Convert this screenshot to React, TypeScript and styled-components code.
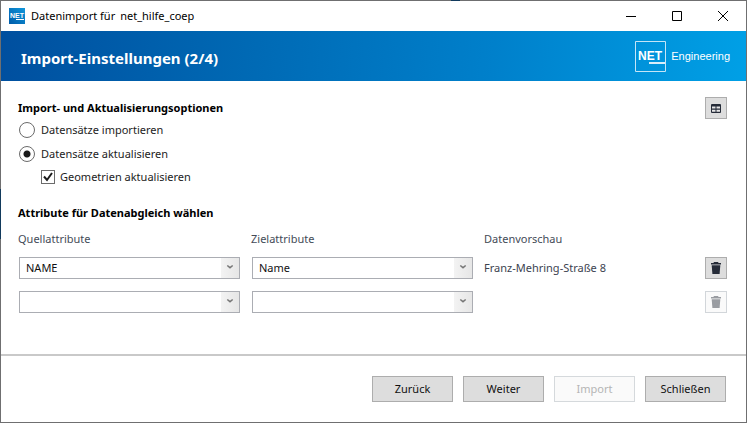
import React, { useState } from "react";
import styled, { createGlobalStyle } from "styled-components";

const GlobalStyle = createGlobalStyle`
  *, *::before, *::after { box-sizing: border-box; }
  html, body, #root { height: 100%; }
  body {
    margin: 0;
    font-family: "Noto Sans", "Open Sans", sans-serif;
    font-size: 11px;
    line-height: 16px;
    color: #1c1c1c;
    background: #6f6f70;
  }
  button, input, select { font: inherit; color: inherit; margin: 0; }
`;

const Frame = styled.div`
  min-height: 100vh;
  padding: 1px;
  display: flex;
  background:
    linear-gradient(#123a5c, #123a5c) 0 189px / 1px 50px no-repeat,
    linear-gradient(#123a5c, #123a5c) 451px 0 / 9px 1px no-repeat,
    #6f6f70;
`;

const Dialog = styled.div`
  flex: 1;
  min-width: 0;
  display: flex;
  flex-direction: column;
  background: #fff;
`;

const TitleBar = styled.header`
  height: 30px;
  display: flex;
  align-items: center;
  padding-left: 8px;
  color: #000;
`;

const AppIcon = styled.svg`
  width: 16px;
  height: 16px;
  flex: none;
`;

const WindowTitle = styled.div`
  flex: 1;
  display: flex;
  gap: 5px;
  margin-left: 6px;
  white-space: nowrap;
`;

const WindowButton = styled.button`
  width: 46px;
  height: 30px;
  padding: 0;
  border: 0;
  background: transparent;
  display: grid;
  place-items: center;
  svg { width: 10px; height: 10px; }
`;

const Banner = styled.div`
  height: 50px;
  display: flex;
  align-items: center;
  justify-content: space-between;
  padding: 0 16px 0 20px;
  color: #fff;
  background: linear-gradient(95deg, #004f9f 0%, #0069b4 33%, #0080cb 66%, #00a0e6 100%);
`;

const BannerTitle = styled.h1`
  margin: 0;
  padding-top: 4px;
  font-size: 15px;
  line-height: 24px;
  font-weight: 700;
`;

const Brand = styled.div`
  display: flex;
  align-items: center;
  gap: 5px;
  font-family: "Liberation Sans", Arial, sans-serif;
`;

const BrandMark = styled.svg`
  width: 31px;
  height: 31px;
`;

const Content = styled.main`
  flex: 1;
  padding: 16px 19px 0 17px;
`;

const TopRow = styled.div`
  display: flex;
  justify-content: space-between;
  align-items: flex-start;
`;

const Options = styled.fieldset`
  margin: 0;
  padding: 2px 0 0;
  border: 0;
  min-width: 0;
`;

const Heading = styled.h2`
  margin: 0;
  font-size: 11px;
  line-height: 16px;
  font-weight: 700;
  color: #000;
`;

const Legend = styled.legend`
  padding: 3px 0 0;
  font-weight: 700;
  color: #000;
`;

const Choice = styled.label<{ $nested?: boolean }>`
  display: flex;
  align-items: center;
  gap: ${(p) => (p.$nested ? 5 : 6)}px;
  height: ${(p) => (p.$nested ? 22 : 24)}px;
  margin-left: ${(p) => (p.$nested ? 23 : 1)}px;
`;

const Radio = styled.input.attrs({ type: "radio" })`
  appearance: none;
  width: 16px;
  height: 16px;
  border: 1px solid #6b6b6b;
  border-radius: 50%;
  background: #fff;
  &:checked { background: radial-gradient(circle, #1b1b1b 3px, #fff 4px); }
`;

const CheckBox = styled.span`
  display: grid;
  width: 14px;
  height: 14px;
  input, svg { grid-area: 1 / 1; width: 14px; height: 14px; }
  input { appearance: none; border: 1px solid #6b6b6b; background: #fff; }
  svg { pointer-events: none; visibility: hidden; }
  input:checked + svg { visibility: visible; }
`;

const IconButton = styled.button`
  width: 22px;
  height: 22px;
  padding: 0;
  display: grid;
  place-items: center;
  border: 1px solid #adadad;
  background: #dddddd;
  color: #252b38;
  &:disabled { border-color: #d2d6da; background: #fafafa; color: #9a9da2; }
`;

const Mapping = styled.section`
  margin-top: 17px;
`;

const MappingGrid = styled.div`
  display: grid;
  grid-template-columns: 17fr 17fr 16fr 22px;
  column-gap: 12px;
  row-gap: 12px;
  align-items: center;
  padding-left: 1px;
  margin-top: 10px;
`;

const ColumnLabel = styled.div`
  color: #444b57;
  margin-bottom: -2px;
  margin-left: -1px;
`;

const Preview = styled.output`
  color: #3c4350;
  margin-left: -1px;
`;

const SelectBox = styled.div`
  display: grid;
  grid-template-columns: 1fr 18px;
  height: 22px;
  border: 1px solid #abadb3;
  background: #fff;
  select {
    grid-area: 1 / 1 / 2 / 3;
    min-width: 0;
    appearance: none;
    border: 0;
    padding: 0 20px 0 6px;
    background: transparent;
    color: #111;
  }
`;

const Arrow = styled.span`
  grid-area: 1 / 2;
  display: grid;
  justify-items: center;
  padding-top: 6px;
  pointer-events: none;
  background: linear-gradient(90deg, #f3f3f3, #e6e6e6);
  svg { width: 8px; height: 6px; }
`;

const Footer = styled.footer`
  display: flex;
  justify-content: flex-end;
  gap: 10px;
  padding: 20px;
  border-top: 2px solid #c9c9c9;
`;

const ActionButton = styled.button`
  width: 81px;
  height: 26px;
  padding: 0;
  border: 1px solid #adadad;
  background: #dddddd;
  color: #111;
  &:disabled { border-color: #d5d9dc; background: #fafafa; color: #b5b5b5; }
`;

const TrashIcon = () => (
  <svg width="12" height="14" viewBox="0 0 12 14" fill="currentColor" aria-hidden="true">
    <path d="M4 1h4l.6 1H11v1.6H1V2h2.4z" />
    <path d="M1.7 4.2h8.6L9.6 13H2.4z" />
  </svg>
);

const TableIcon = () => (
  <svg width="10" height="9" viewBox="0 0 10 9" aria-hidden="true">
    <rect width="10" height="9" rx="1" fill="#252b38" />
    <path d="M1 2.500h3.500v2H1zM5.500 2.500H9v2H5.500zM1 5.700h3.500v2H1zM5.500 5.700H9v2H5.500z" fill="#e6e6e6" />
  </svg>
);

type SelectProps = { label: string; value: string; options: string[]; onChange: (v: string) => void };

const AttributeSelect = ({ label, value, options, onChange }: SelectProps) => (
  <SelectBox>
    <select aria-label={label} value={value} onChange={(e) => onChange(e.target.value)}>
      {options.map((o) => (
        <option key={o} value={o}>{o}</option>
      ))}
    </select>
    <Arrow>
      <svg viewBox="0 0 8 6" fill="none" stroke="#777" strokeWidth="1.500">
        <path d="M1.300 1.500 4 3.700l2.700-2.200" />
      </svg>
    </Arrow>
  </SelectBox>
);

export default function App() {
  const [mode, setMode] = useState("update");
  const [geometry, setGeometry] = useState(true);
  const [rows, setRows] = useState([
    { source: "NAME", target: "Name", preview: "Franz-Mehring-Straße 8" },
    { source: "", target: "", preview: "" },
  ]);
  const change = (i: number, key: "source" | "target", value: string) =>
    setRows(rows.map((r, n) => (n === i ? { ...r, [key]: value } : r)));

  return (
    <>
      <GlobalStyle />
      <Frame>
        <Dialog>
          <TitleBar>
            <AppIcon viewBox="0 0 16 16" aria-hidden="true">
              <defs>
                <linearGradient id="app-icon" x1="0" y1="1" x2="1" y2="0">
                  <stop offset="0" stopColor="#005ba8" />
                  <stop offset="1" stopColor="#1097dc" />
                </linearGradient>
              </defs>
              <rect width="16" height="16" fill="url(#app-icon)" />
              <text x="1" y="10" fill="#fff" fontFamily="Liberation Sans" fontWeight="700" fontSize="7">NET</text>
              <path d="M7 11.500h8" stroke="#fff" />
            </AppIcon>
            <WindowTitle>
              <span>Datenimport für</span>
              <span>net_hilfe_coep</span>
            </WindowTitle>
            <WindowButton aria-label="Minimieren">
              <svg viewBox="0 0 10 10" stroke="#000"><path d="M0 5.500h10" /></svg>
            </WindowButton>
            <WindowButton aria-label="Maximieren">
              <svg viewBox="0 0 10 10" stroke="#000" fill="none"><path d="M.5.5h9v9h-9z" /></svg>
            </WindowButton>
            <WindowButton aria-label="Fenster schließen">
              <svg viewBox="0 0 10 10" stroke="#000"><path d="m0 0 10 10M10 0 0 10" /></svg>
            </WindowButton>
          </TitleBar>

          <Banner>
            <BannerTitle>Import-Einstellungen (2/4)</BannerTitle>
            <Brand>
              <BrandMark viewBox="0 0 31 31" role="img" aria-label="NET">
                <path d="M.5.5h30v30H.5z" fill="none" stroke="#c5e5f7" />
                <text x="3" y="19" fill="#fff" fontFamily="Liberation Sans" fontWeight="700" fontSize="12">NET</text>
                <path d="M14 22h16" stroke="#d9eefa" strokeWidth="2" />
              </BrandMark>
              <span>Engineering</span>
            </Brand>
          </Banner>

          <Content>
            <TopRow>
              <Options>
                <Legend>Import- und Aktualisierungsoptionen</Legend>
                <Choice>
                  <Radio name="mode" checked={mode === "import"} onChange={() => setMode("import")} />
                  Datensätze importieren
                </Choice>
                <Choice>
                  <Radio name="mode" checked={mode === "update"} onChange={() => setMode("update")} />
                  Datensätze aktualisieren
                </Choice>
                <Choice $nested>
                  <CheckBox>
                    <input type="checkbox" checked={geometry} onChange={(e) => setGeometry(e.target.checked)} />
                    <svg viewBox="0 0 14 14" fill="none" stroke="#1b1b1b" strokeWidth="2">
                      <path d="M3 6.500 6 10l5-7" />
                    </svg>
                  </CheckBox>
                  Geometrien aktualisieren
                </Choice>
              </Options>
              <IconButton aria-label="Tabelle anzeigen"><TableIcon /></IconButton>
            </TopRow>

            <Mapping>
              <Heading>Attribute für Datenabgleich wählen</Heading>
              <MappingGrid>
                <ColumnLabel>Quellattribute</ColumnLabel>
                <ColumnLabel>Zielattribute</ColumnLabel>
                <ColumnLabel>Datenvorschau</ColumnLabel>
                <span />
                {rows.map((r, i) => (
                  <React.Fragment key={i}>
                    <AttributeSelect label="Quellattribute" value={r.source} options={["", "NAME"]} onChange={(v) => change(i, "source", v)} />
                    <AttributeSelect label="Zielattribute" value={r.target} options={["", "Name"]} onChange={(v) => change(i, "target", v)} />
                    <Preview>{r.preview}</Preview>
                    <IconButton aria-label="Zeile löschen" disabled={!r.source}><TrashIcon /></IconButton>
                  </React.Fragment>
                ))}
              </MappingGrid>
            </Mapping>
          </Content>

          <Footer>
            <ActionButton>Zurück</ActionButton>
            <ActionButton>Weiter</ActionButton>
            <ActionButton disabled>Import</ActionButton>
            <ActionButton>Schließen</ActionButton>
          </Footer>
        </Dialog>
      </Frame>
    </>
  );
}
